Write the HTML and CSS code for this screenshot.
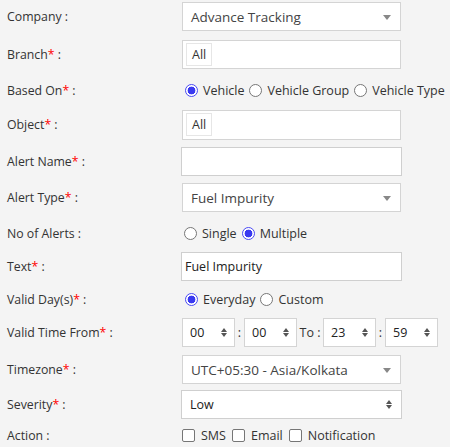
FILE: index.html
```html
<!DOCTYPE html>
<html>
<head>
<meta charset="utf-8">
<link rel="stylesheet" href="styles.css">
</head>
<body>
<div class="form">
  <div class="row m2">
    <div class="lbl">Company :</div>
    <div class="chosen"><span>Advance Tracking</span><i class="caret"></i></div>
  </div>
  <div class="row m9">
    <div class="lbl">Branch<b>*</b> :</div>
    <div class="multi"><span class="tag">All</span></div>
  </div>
  <div class="row short m11">
    <div class="lbl">Based On<b>*</b> :</div>
    <div class="opts">
      <span class="radio on"></span><span class="opt">Vehicle</span>
      <span class="radio"></span><span class="opt">Vehicle Group</span>
      <span class="radio"></span><span class="opt">Vehicle Type</span>
    </div>
  </div>
  <div class="row m10">
    <div class="lbl">Object<b>*</b> :</div>
    <div class="multi tall"><span class="tag">All</span></div>
  </div>
  <div class="row m8">
    <div class="lbl">Alert Name<b>*</b> :</div>
    <div class="text"></div>
  </div>
  <div class="row m7">
    <div class="lbl">Alert Type<b>*</b> :</div>
    <div class="chosen"><span>Fuel Impurity</span><i class="caret"></i></div>
  </div>
  <div class="row short m11">
    <div class="lbl">No of Alerts :</div>
    <div class="opts o3">
      <span class="radio"></span><span class="opt">Single</span>
      <span class="radio on"></span><span class="opt">Multiple</span>
    </div>
  </div>
  <div class="row m9">
    <div class="lbl">Text<b>*</b> :</div>
    <div class="text"><span>Fuel Impurity</span></div>
  </div>
  <div class="row short m8">
    <div class="lbl">Valid Day(s)<b>*</b> :</div>
    <div class="opts">
      <span class="radio on"></span><span class="opt">Everyday</span>
      <span class="radio"></span><span class="opt">Custom</span>
    </div>
  </div>
  <div class="row m9">
    <div class="lbl">Valid Time From<b>*</b> :</div>
    <div class="times">
      <div class="num"><span>00</span><i class="spin"></i></div>
      <span class="sep">:</span>
      <div class="num"><span>00</span><i class="spin"></i></div>
      <span class="to">To :</span>
      <div class="num"><span>23</span><i class="spin"></i></div>
      <span class="sep">:</span>
      <div class="num"><span>59</span><i class="spin"></i></div>
    </div>
  </div>
  <div class="row m8">
    <div class="lbl">Timezone<b>*</b> :</div>
    <div class="chosen"><span>UTC+05:30 - Asia/Kolkata</span><i class="caret"></i></div>
  </div>
  <div class="row m6">
    <div class="lbl">Severity<b>*</b> :</div>
    <div class="native"><span>Low</span><i class="spin"></i></div>
  </div>
  <div class="row short m6">
    <div class="lbl">Action :</div>
    <div class="opts checks">
      <span class="check"></span><span class="opt">SMS</span>
      <span class="check"></span><span class="opt">Email</span>
      <span class="check"></span><span class="opt">Notification</span>
    </div>
  </div>
</div>
</body>
</html>
```

FILE: styles.css
```css
html, body {
  margin: 0;
  padding: 0;
  background: #f4f4f4;
}
body {
  font-family: "Open Sans", "DejaVu Sans", sans-serif;
  font-size: 12px;
  color: #333;
}
.form {
  padding-left: 7px;
  display: flex;
  flex-direction: column;
}
.row {
  display: flex;
  align-items: center;
  height: 29px;
}
.row.short { height: 20px; }
.m2 { margin-top: 2px; }
.m6 { margin-top: 6px; }
.m7 { margin-top: 7px; }
.m8 { margin-top: 8px; }
.m9 { margin-top: 9px; }
.m10 { margin-top: 10px; }
.m11 { margin-top: 11px; }
.lbl {
  width: 174px;
  flex: none;
  font-size: 12.3px;
}
.lbl b {
  color: #f00;
  font-weight: normal;
}
.chosen {
  box-sizing: border-box;
  margin-left: 1px;
  width: 219px;
  height: 29px;
  background: #fff;
  border: 1px solid #d4d4d4;
  display: flex;
  align-items: center;
  padding: 0 9px 0 8px;
  font-size: 13.5px;
  color: #444;
}
.chosen span { flex: 1; }
.caret {
  width: 0;
  height: 0;
  border-left: 4px solid transparent;
  border-right: 4px solid transparent;
  border-top: 5px solid #888;
  margin-top: 1px;
}
.multi {
  box-sizing: border-box;
  margin-left: 1px;
  width: 219px;
  height: 29px;
  background: #fff;
  border: 1px solid #d4d4d4;
  display: flex;
  align-items: center;
  padding: 0 3px;
}
.multi.tall { height: 30px; }
.tag {
  box-sizing: border-box;
  height: 23px;
  padding: 0 5px;
  border: 1px solid #e6e6e6;
  display: flex;
  align-items: center;
  font-size: 12.5px;
  color: #333;
}
.text {
  box-sizing: border-box;
  width: 221px;
  height: 29px;
  background: #fff;
  border: 1px solid #cfcfcf;
  display: flex;
  align-items: center;
  padding: 0 3px;
  font-size: 12.5px;
  color: #222;
}
.opts {
  display: flex;
  align-items: center;
  padding-left: 4px;
}
.opts.o3 { padding-left: 3px; }
.opts.checks { padding-left: 1px; }
.opt {
  margin: 0 5px 0 5px;
  font-size: 12.5px;
  color: #333;
}
.checks .opt { margin: 0 6px 0 6px; }
.radio {
  box-sizing: border-box;
  width: 13px;
  height: 13px;
  border-radius: 50%;
  border: 1px solid #767676;
  background: #fff;
  flex: none;
}
.radio.on {
  border: 1px solid #4a4af4;
  background: radial-gradient(circle, #3a3af0 0 3.6px, #fff 4.2px);
}
.check {
  box-sizing: border-box;
  width: 13px;
  height: 13px;
  border-radius: 2px;
  border: 1px solid #767676;
  background: #fff;
  flex: none;
}
.times {
  display: flex;
  align-items: center;
  margin-left: 1px;
}
.num {
  box-sizing: border-box;
  width: 53px;
  height: 29px;
  background: #fff;
  border: 1px solid #d4d4d4;
  display: flex;
  align-items: center;
  padding: 0 7px 0 7px;
  font-size: 12.5px;
  color: #222;
}
.num span { flex: 1; }
.sep {
  width: 9px;
  text-align: center;
  font-size: 12.5px;
}
.to {
  width: 26px;
  text-align: center;
  font-size: 12.5px;
}
.spin {
  position: relative;
  width: 6px;
  height: 9px;
}
.spin::before, .spin::after {
  content: "";
  position: absolute;
  left: 0;
  width: 0;
  height: 0;
  border-left: 3px solid transparent;
  border-right: 3px solid transparent;
}
.spin::before {
  top: 0;
  border-bottom: 4px solid #555;
}
.spin::after {
  bottom: 0;
  border-top: 4px solid #555;
}
.native {
  box-sizing: border-box;
  width: 221px;
  height: 29px;
  background: #fff;
  border: 1px solid #cfcfcf;
  display: flex;
  align-items: center;
  padding: 0 9px 0 8px;
  font-size: 12.5px;
  color: #222;
}
.native span { flex: 1; }
```
